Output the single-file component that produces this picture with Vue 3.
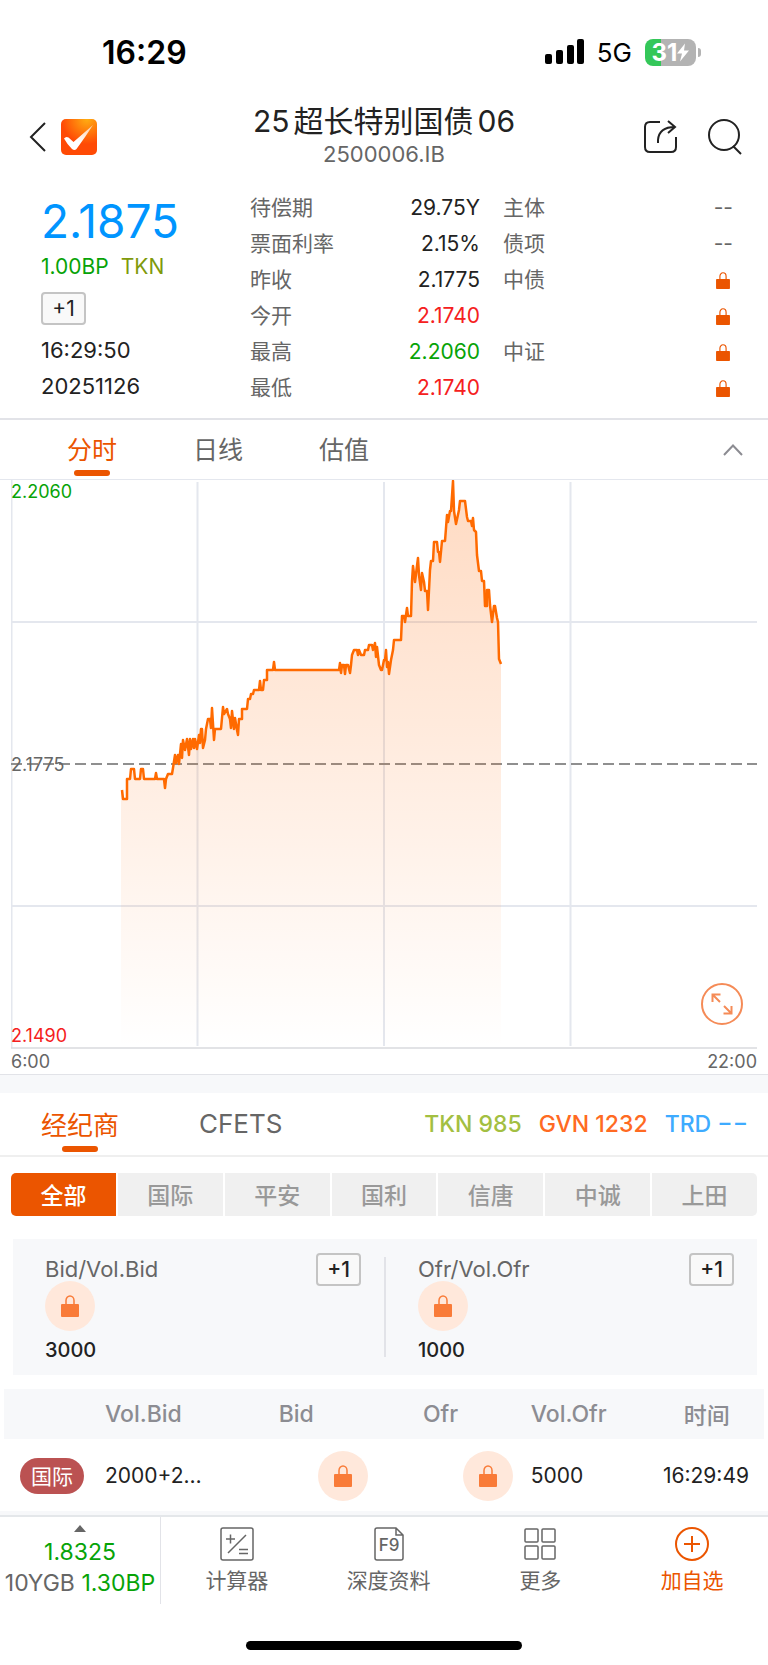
<template>
  <div class="page">
    <!-- Status bar -->
    <div class="status-bar">
      <span class="status-time">16:29</span>
      <div class="status-right">
        <svg class="signal" width="39" height="26" viewBox="0 0 39 26">
          <rect x="0" y="15" width="7" height="10" rx="2" />
          <rect x="11" y="11" width="7" height="14" rx="2" />
          <rect x="22" y="6" width="7" height="19" rx="2" />
          <rect x="32" y="0" width="7" height="25" rx="2" />
        </svg>
        <span class="network">5G</span>
        <div class="battery">
          <span>31</span>
          <svg width="12" height="19" viewBox="0 0 12 18"><path d="M8 0L0 10h5L3 18l9-11H7z" fill="#fff" /></svg>
          <i class="battery-tip"></i>
        </div>
      </div>
    </div>

    <!-- Header -->
    <header class="header">
      <div class="header-left">
        <button class="icon-btn" aria-label="返回">
          <svg width="18" height="32" viewBox="0 0 18 32"><path d="M16 2L2 16l14 14" fill="none" stroke="#222" stroke-width="2" /></svg>
        </button>
        <svg width="36" height="36" viewBox="0 0 36 36">
          <defs>
            <radialGradient id="logoBg" cx="0.72" cy="0" r="0.7">
              <stop offset="0" stop-color="#ffae12" />
              <stop offset="1" stop-color="#ff4a05" />
            </radialGradient>
            <linearGradient id="logoTick" x1="0" y1="1" x2="1" y2="0">
              <stop offset="0.4" stop-color="#fff" />
              <stop offset="1" stop-color="#ffc9a0" />
            </linearGradient>
          </defs>
          <rect width="36" height="36" rx="5" fill="url(#logoBg)" />
          <path d="M3 19.500Q5 17 7.500 18.500L12.500 23L32 6Q25 17 15.500 30Q13.500 32 11 30Q6 25 3 19.500Z" fill="url(#logoTick)" />
        </svg>
      </div>
      <div class="header-title">
        <h1><span>25</span><span>超长特别国债</span><span>06</span></h1>
        <p>2500006.IB</p>
      </div>
      <div class="header-right">
        <button class="icon-btn" aria-label="分享">
          <svg width="36" height="36" viewBox="0 0 36 36" fill="none" stroke="#222" stroke-width="2">
            <path d="M17 3H7Q2 3 2 8V28Q2 33 7 33H28Q33 33 33 28V18" />
            <path d="M15 24V21Q16 8 32 8M25 2L32 8L25 14" />
          </svg>
        </button>
        <button class="icon-btn" aria-label="搜索">
          <svg width="36" height="36" viewBox="0 0 36 36" fill="none" stroke="#222" stroke-width="2">
            <circle cx="17" cy="16" r="15" />
            <path d="M26 27L34 35" />
          </svg>
        </button>
      </div>
    </header>

    <!-- Quote -->
    <section class="quote">
      <div class="quote-main">
        <div class="price">2.1875</div>
        <div class="change"><span class="green">1.00BP</span><span class="olive">TKN</span></div>
        <div class="settle-row"><span class="settle">+1</span></div>
        <div class="quote-line">16:29:50</div>
        <div class="quote-line">20251126</div>
      </div>
      <dl class="info">
        <div v-for="item in info" :key="item.label" class="info-row">
          <dt>{{ item.label }}</dt>
          <dd :class="item.color">{{ item.value }}</dd>
        </div>
      </dl>
      <dl class="info">
        <div v-for="(item, i) in ratings" :key="i" class="info-row">
          <dt>{{ item.label }}</dt>
          <dd v-if="item.value" class="muted">{{ item.value }}</dd>
          <dd v-else class="info-lock">
            <svg width="14" height="17" viewBox="0 0 18 22"><path d="M5 10V5.500a4 4.500 0 0 1 8 0V10" fill="none" stroke="#eb5500" stroke-width="1.500" /><rect y="9" width="18" height="13" rx="1" fill="#eb5500" /></svg>
          </dd>
        </div>
      </dl>
    </section>

    <!-- Chart tabs -->
    <nav class="chart-tabs">
      <button v-for="tab in chartTabs" :key="tab" class="tab" :class="{ active: tab === chartTab }" @click="chartTab = tab">{{ tab }}</button>
      <button class="icon-btn collapse" aria-label="收起">
        <svg width="20" height="12" viewBox="0 0 20 12"><path d="M1 11L10 1.500L19 11" fill="none" stroke="#8c8c92" stroke-width="2" /></svg>
      </button>
    </nav>

    <!-- Intraday chart -->
    <section class="chart">
      <div class="plot">
        <svg class="plot-svg" viewBox="0 0 746 569">
          <defs>
            <linearGradient id="areaFill" gradientUnits="userSpaceOnUse" x1="0" y1="0" x2="0" y2="568">
              <stop offset="0" stop-color="#ff6600" stop-opacity="0.24" />
              <stop offset="1" stop-color="#ff6600" stop-opacity="0" />
            </linearGradient>
          </defs>
          <path d="M0.500 0V568M186.500 2V566M373 2V566M559.500 2V566M0 142H746M0 426H746" fill="none" stroke="#e4e7ee" stroke-width="2" />
          <path d="M0 568H746" stroke="#d9dade" stroke-width="1.500" />
          <path d="M0 284H746" stroke="#8f8f8f" stroke-width="2" stroke-dasharray="11 5" />
          <polygon :points="area" fill="url(#areaFill)" />
          <polyline :points="line" fill="none" stroke="#ff6a00" stroke-width="2.500" stroke-linejoin="round" />
        </svg>
        <span class="axis-label top green">2.2060</span>
        <span class="axis-label mid">2.1775</span>
        <span class="axis-label bottom red">2.1490</span>
        <button class="icon-btn expand" aria-label="全屏">
          <svg width="42" height="42" viewBox="0 0 42 42" fill="none" stroke="#f58b57" stroke-width="2">
            <circle cx="21" cy="21" r="20" />
            <path d="M19 19L12 12M11.500 19V11.500H19.500M23 23L30 30M30.500 23V30.500H22.500" />
          </svg>
        </button>
      </div>
      <div class="time-axis"><span>6:00</span><span>22:00</span></div>
    </section>

    <div class="band"></div>

    <!-- Broker tabs -->
    <nav class="broker-tabs">
      <button v-for="tab in brokerTabs" :key="tab" class="tab" :class="{ active: tab === brokerTab }" @click="brokerTab = tab">{{ tab }}</button>
      <div class="totals">
        <span class="tkn">TKN 985</span>
        <span class="gvn">GVN 1232</span>
        <span class="trd">TRD −−</span>
      </div>
    </nav>

    <div class="segments">
      <button v-for="name in brokers" :key="name" class="segment" :class="{ active: name === broker }" @click="broker = name">{{ name }}</button>
    </div>

    <!-- Best bid / offer -->
    <section class="best">
      <template v-for="(side, i) in best" :key="side.label">
        <i v-if="i > 0" class="best-divider"></i>
        <div class="best-side">
          <div class="best-info">
            <span class="best-label">{{ side.label }}</span>
            <span class="lock">
              <svg width="18" height="22" viewBox="0 0 18 22"><path d="M5 10V5.500a4 4.500 0 0 1 8 0V10" fill="none" stroke="#f97b38" stroke-width="1.500" /><rect y="9" width="18" height="13" rx="1" fill="#f97b38" /></svg>
            </span>
            <span class="best-volume">{{ side.volume }}</span>
          </div>
          <span class="settle">+1</span>
        </div>
      </template>
    </section>

    <table class="deals">
      <thead>
        <tr>
          <th class="col-broker"></th>
          <th class="col-volbid">Vol.Bid</th>
          <th class="col-bid">Bid</th>
          <th class="col-ofr">Ofr</th>
          <th class="col-volofr">Vol.Ofr</th>
          <th class="col-time">时间</th>
        </tr>
      </thead>
      <tbody>
        <tr v-for="deal in deals" :key="deal.time">
          <td><span class="badge">{{ deal.broker }}</span></td>
          <td class="col-volbid">{{ deal.volBid }}</td>
          <td v-for="n in 2" :key="n" class="cell-lock">
            <span class="lock">
              <svg width="18" height="22" viewBox="0 0 18 22"><path d="M5 10V5.500a4 4.500 0 0 1 8 0V10" fill="none" stroke="#f97b38" stroke-width="1.500" /><rect y="9" width="18" height="13" rx="1" fill="#f97b38" /></svg>
            </span>
          </td>
          <td class="col-volofr">{{ deal.volOfr }}</td>
          <td class="col-time">{{ deal.time }}</td>
        </tr>
      </tbody>
    </table>

    <!-- Bottom bar -->
    <footer class="bottom-bar">
      <button class="benchmark">
        <svg width="12" height="7" viewBox="0 0 12 7"><path d="M6 0L12 7H0z" fill="#666" /></svg>
        <span class="green">1.8325</span>
        <span class="benchmark-line">10YGB <b class="green">1.30BP</b></span>
      </button>
      <div class="actions">
        <button class="action">
          <svg width="34" height="34" viewBox="0 0 34 34" fill="none" stroke="#666" stroke-width="1.500">
            <rect x="1" y="1" width="32" height="32" rx="2" />
            <path d="M6 12H15M10.500 7.500V16.500M8 26L26 8M19 22.500H28M19 26.500H28" />
          </svg>
          <span>计算器</span>
        </button>
        <button class="action">
          <svg width="34" height="34" viewBox="0 0 34 34" fill="none" stroke="#666" stroke-width="1.500">
            <path d="M24 1H5Q3 1 3 3V31Q3 33 5 33H29Q31 33 31 31V8zM24 1V8H31" />
            <text x="17" y="24" text-anchor="middle" class="f9">F9</text>
          </svg>
          <span>深度资料</span>
        </button>
        <button class="action">
          <svg width="34" height="34" viewBox="0 0 34 34" fill="none" stroke="#666" stroke-width="1.500">
            <rect x="2" y="2" width="13" height="13" rx="1" />
            <rect x="19" y="2" width="13" height="13" rx="1" />
            <rect x="2" y="19" width="13" height="13" rx="1" />
            <rect x="19" y="19" width="13" height="13" rx="1" />
          </svg>
          <span>更多</span>
        </button>
        <button class="action primary">
          <svg width="34" height="34" viewBox="0 0 34 34" fill="none" stroke="#eb5500" stroke-width="2">
            <circle cx="17" cy="17" r="16" />
            <path d="M9 17H25M17 9V25" />
          </svg>
          <span>加自选</span>
        </button>
      </div>
    </footer>
    <div class="home-indicator"></div>
  </div>
</template>

<script setup>
import { ref } from 'vue'

const info = [
  { label: '待偿期', value: '29.75Y' },
  { label: '票面利率', value: '2.15%' },
  { label: '昨收', value: '2.1775' },
  { label: '今开', value: '2.1740', color: 'red' },
  { label: '最高', value: '2.2060', color: 'green' },
  { label: '最低', value: '2.1740', color: 'red' }
]

// rows without a value are locked
const ratings = [
  { label: '主体', value: '--' },
  { label: '债项', value: '--' },
  { label: '中债' },
  { label: '' },
  { label: '中证' },
  { label: '' }
]

const chartTabs = ['分时', '日线', '估值']
const chartTab = ref('分时')

const brokerTabs = ['经纪商', 'CFETS']
const brokerTab = ref('经纪商')

const brokers = ['全部', '国际', '平安', '国利', '信唐', '中诚', '上田']
const broker = ref('全部')

const best = [
  { label: 'Bid/Vol.Bid', volume: '3000' },
  { label: 'Ofr/Vol.Ofr', volume: '1000' }
]

const deals = [
  { broker: '国际', volBid: '2000+2…', volOfr: '5000', time: '16:29:49' }
]

const line = [
  '111,310 112,319 116,319 116,299 119,299 120,289 123,289 124,299 129,299 130,289 132,289 133,299',
  '144,299 145,293 146,299 153,299 154,308 155,299 157,294 161,294 162,288 164,275 165,283 167,275',
  '168,284 170,264 171,278 172,260 174,270 176,259 178,275 179,259 180,269 182,259 183,268 184,259',
  '186,269 188,255 189,263 190,249 191,249 192,268 194,260 195,249 197,239 199,239 200,248 201,228',
  '203,260 204,249 210,249 212,227 213,234 216,229 217,234 219,239 220,248 221,231 223,249 224,238',
  '226,250 227,255 228,239 231,239 231,229 236,229 237,219 239,219 240,214 242,214 243,210 248,210',
  '249,201 250,210 252,210 253,200 256,200 256,190 262,190 263,182 264,190 328,190 329,183 330,193',
  '331,185 333,185 334,194 335,185 337,185 339,193 340,185 341,175 343,170 346,170 347,175 348,170',
  '350,175 353,175 354,170 357,170 358,165 361,165 362,170 364,163 365,177 366,167 368,185 370,190',
  '371,190 373,180 374,180 375,170 376,187 377,182 378,194 380,180 382,170 383,160 390,160 391,136',
  '393,136 394,142 396,128 397,136 400,136 401,101 402,86 404,102 407,78 408,95 410,110 411,93',
  '413,102 414,111 416,111 417,130 418,110 419,90 420,81 422,81 423,62 426,62 427,72 428,72',
  '429,82 431,61 434,61 436,35 437,42 439,31 440,31 442,1 443,31 445,44 448,30 449,21 454,21',
  '456,37 457,41 460,41 461,46 462,38 463,50 465,52 466,75 468,91 470,91 471,101 473,101 474,126',
  '476,126 476,110 478,110 479,125 481,142 483,126 484,126 486,138 487,142 488,179 490,184'
].join(' ')

const area = `110,568 110,310 ${line} 490,568`
</script>

<style>
body {
  background: #fff;
}
</style>

<style scoped>
* {
  margin: 0;
  padding: 0;
  box-sizing: border-box;
}

.page {
  width: 100%;
  font-family: 'Inter', 'Noto Sans CJK SC', sans-serif;
  font-size: 21px;
  color: #222;
  background: #fff;
}

button {
  border: none;
  background: none;
  font: inherit;
  color: inherit;
  cursor: pointer;
}

svg {
  display: block;
  flex-shrink: 0;
}

.green { color: #07a307; }
.red { color: #f52020; }
.olive { color: #7f9a0c; }
.muted { color: #666; }

/* Status bar */
.status-bar {
  display: flex;
  justify-content: space-between;
  align-items: center;
  height: 104px;
  padding: 0 67px 0 102px;
  color: #000;
}

.status-time {
  font-size: 32px;
  font-weight: 600;
}

.status-right {
  display: flex;
  align-items: center;
  gap: 13px;
}

.network {
  font-size: 26px;
}

.battery {
  position: relative;
  display: flex;
  align-items: center;
  justify-content: center;
  width: 51px;
  height: 27px;
  margin-right: 5px;
  border-radius: 8px;
  background: linear-gradient(90deg, #34c759 31%, #b3b3b3 31%);
  color: #fff;
  font-size: 24px;
  font-weight: 700;
  line-height: 27px;
}

.battery-tip {
  position: absolute;
  top: 9px;
  right: -5px;
  width: 3px;
  height: 9px;
  border-radius: 0 4px 4px 0;
  background: #b3b3b3;
}

/* Header */
.header {
  display: grid;
  grid-template-columns: 1fr auto 1fr;
  align-items: center;
  height: 65px;
  padding: 0 25px;
}

.header-left {
  display: flex;
  align-items: center;
  gap: 14px;
  padding-left: 4px;
}

.header-right {
  display: flex;
  justify-content: flex-end;
  gap: 28px;
}

.header-title {
  text-align: center;
}

.header-title h1 {
  display: flex;
  justify-content: center;
  gap: 4px;
  font-size: 30px;
  font-weight: 400;
  line-height: 35px;
}

.header-title p {
  font-size: 22px;
  line-height: 30px;
  color: #666;
}

/* Quote */
.quote {
  display: grid;
  grid-template-columns: 1fr 230px 230px;
  column-gap: 23px;
  padding: 21px 35px 12px 41px;
  border-bottom: 2px solid #e2e3e8;
}

.price {
  font-size: 46px;
  line-height: 62px;
  color: #0095ff;
}

.change {
  display: flex;
  gap: 12px;
  line-height: 30px;
}

.settle-row {
  display: flex;
  align-items: center;
  height: 50px;
  padding-top: 2px;
}

.settle {
  display: flex;
  align-items: center;
  justify-content: center;
  width: 45px;
  height: 33px;
  border: 2px solid #c4c4c4;
  border-radius: 4px;
  background: #f9f9f9;
}

.quote-line {
  font-size: 22px;
}

.quote-line,
.info-row {
  height: 36px;
  line-height: 36px;
}

.info-row {
  display: flex;
  justify-content: space-between;
}

.info-row dt {
  color: #666;
}

.info-lock {
  display: flex;
  align-items: center;
  padding-right: 3px;
}

/* Tabs */
.chart-tabs,
.broker-tabs {
  display: flex;
  align-items: stretch;
}

.chart-tabs {
  height: 60px;
  gap: 76px;
  padding: 0 25px 0 67px;
  border-bottom: 1px solid #e4e7ee;
}

.tab {
  position: relative;
  padding-bottom: 3px;
  font-size: 25px;
  color: #666;
}

.tab.active {
  color: #eb5500;
}

.tab.active::after {
  content: '';
  position: absolute;
  left: 50%;
  bottom: 3px;
  width: 36px;
  height: 6px;
  border-radius: 3px;
  background: #eb5500;
  transform: translateX(-50%);
}

.collapse {
  margin-left: auto;
}

/* Chart */
.chart {
  padding: 0 11px;
  border-bottom: 1px solid #e2e3e8;
}

.plot {
  position: relative;
}

.plot-svg {
  width: 100%;
  height: auto;
}

.axis-label {
  position: absolute;
  left: 0;
  font-size: 18px;
  line-height: 20px;
}

.axis-label.top { top: 2px; }
.axis-label.mid { top: 50%; color: #666; transform: translateY(-50%); }
.axis-label.bottom { bottom: 3px; }

.expand {
  position: absolute;
  right: 14px;
  bottom: 24px;
}

.time-axis {
  display: flex;
  justify-content: space-between;
  font-size: 18px;
  line-height: 25px;
  color: #666;
}

.band {
  height: 18px;
  background: #f7f8fa;
}

.broker-tabs {
  height: 64px;
  gap: 80px;
  padding: 0 20px 0 41px;
  border-bottom: 2px solid #efefef;
}

.broker-tabs .tab {
  padding-bottom: 2px;
  font-size: 26px;
}

.totals {
  display: flex;
  align-items: center;
  gap: 17px;
  margin-left: auto;
  font-size: 23px;
  font-weight: 500;
}

.tkn { color: #a3bf42; }
.gvn { color: #ff6a22; }
.trd { color: #3eabff; }

.segments {
  display: flex;
  gap: 2px;
  margin: 16px 11px 23px;
  border-radius: 5px;
  overflow: hidden;
}

.segment {
  flex: 1;
  height: 43px;
  padding-bottom: 2px;
  background: #f0f0f0;
  font-size: 23px;
  font-weight: 500;
  color: #999;
}

.segment.active {
  background: #eb5500;
  color: #fff;
}

/* Best bid / offer */
.best {
  display: flex;
  margin: 0 11px 14px 13px;
  padding: 14px 0 12px;
  background: #f7f8fa;
}

.best-side {
  flex: 1;
  display: flex;
  justify-content: space-between;
  padding: 0 23px 0 32px;
}

.best-divider {
  width: 2px;
  margin: 4px 0 6px;
  background: #e2e3e8;
}

.best-info {
  display: flex;
  flex-direction: column;
}

.best-label {
  padding-top: 4px;
  font-size: 22px;
  line-height: 24px;
  color: #666;
}

.best-volume {
  padding-top: 6px;
  font-size: 20px;
  font-weight: 500;
  line-height: 26px;
}

.best .settle {
  font-weight: 500;
}

.lock {
  display: inline-flex;
  align-items: center;
  justify-content: center;
  width: 50px;
  height: 50px;
  border-radius: 50%;
  background: #ffe8db;
  vertical-align: middle;
}

/* Deals */
.deals {
  width: calc(100% - 8px);
  margin: 0 4px;
  table-layout: fixed;
  border-collapse: collapse;
}

.deals th {
  height: 50px;
  background: #f7f8fa;
  font-size: 23px;
  font-weight: 500;
  color: #8c8c92;
}

.deals td {
  height: 73px;
  white-space: nowrap;
}

.col-broker { width: 101px; }
.col-volbid { width: 119px; text-align: left; }
.col-bid { width: 19%; }
.col-ofr { width: 19%; }
.col-volofr { padding-left: 18px; text-align: left; }
.col-time { width: 14%; padding-right: 8px; }

td.col-time,
.cell-lock {
  text-align: right;
}

td.col-time {
  padding-right: 15px;
}

.badge {
  display: flex;
  align-items: center;
  justify-content: center;
  width: 64px;
  height: 36px;
  margin-left: 16px;
  padding-bottom: 2px;
  border-radius: 18px;
  background: #bb5252;
  color: #fff;
}

/* Bottom bar */
.bottom-bar {
  display: flex;
  border-top: 2px solid #e4e7ea;
  box-shadow: 0 -4px 0 #f7f8fa;
  margin-top: 3px;
}

.benchmark {
  display: flex;
  flex-direction: column;
  align-items: center;
  width: 161px;
  height: 87px;
  padding: 8px 0 0;
  border-right: 1px solid #e2e3e8;
  font-size: 23px;
  white-space: nowrap;
}

.benchmark span {
  line-height: 31px;
}

.benchmark svg {
  margin-bottom: 5px;
}

.benchmark-line {
  color: #666;
}

.benchmark b {
  font-weight: 400;
}

.actions {
  flex: 1;
  display: grid;
  grid-template-columns: repeat(4, 1fr);
}

.action {
  display: flex;
  flex-direction: column;
  align-items: center;
  gap: 4px;
  padding-top: 10px;
  line-height: 32px;
  color: #666;
}

.action.primary {
  color: #eb5500;
}

.f9 {
  font-size: 17px;
  font-weight: 500;
  fill: #666;
  stroke: none;
}

.home-indicator {
  width: 36%;
  height: 9px;
  margin: 37px auto 14px;
  border-radius: 5px;
  background: #000;
}
</style>
